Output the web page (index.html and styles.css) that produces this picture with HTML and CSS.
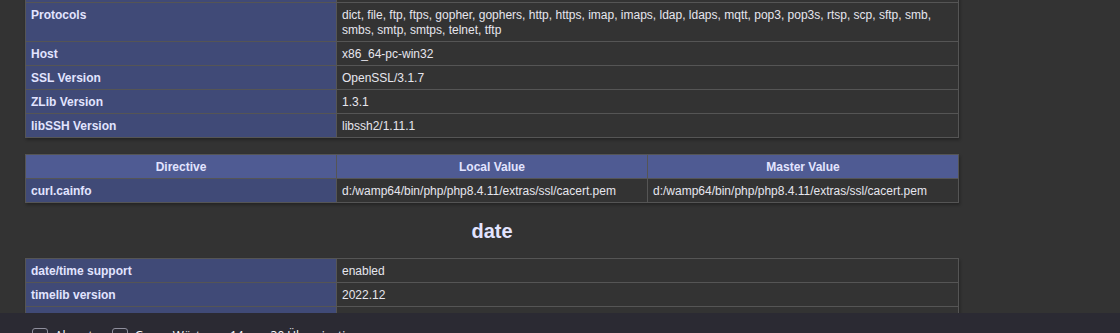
FILE: index.html
```html
<!DOCTYPE html>
<html lang="de">
<head>
    <meta charset="UTF-8">
    <meta name="viewport" content="width=device-width, initial-scale=1.0">
    <title>phpinfo()</title>
    <link rel="stylesheet" href="styles.css">
</head>
<body>
    <div class="center">
        <table class="first">
            <tr><td class="e">zstd</td><td class="v">No</td></tr>
            <tr><td class="e">Protocols</td><td class="v">dict, file, ftp, ftps, gopher, gophers, http, https, imap, imaps, ldap, ldaps, mqtt, pop3, pop3s, rtsp, scp, sftp, smb, smbs, smtp, smtps, telnet, tftp</td></tr>
            <tr><td class="e">Host</td><td class="v">x86_64-pc-win32</td></tr>
            <tr><td class="e">SSL Version</td><td class="v">OpenSSL/3.1.7</td></tr>
            <tr><td class="e">ZLib Version</td><td class="v">1.3.1</td></tr>
            <tr><td class="e">libSSH Version</td><td class="v">libssh2/1.11.1</td></tr>
        </table>

        <table class="ini">
            <tr class="h"><th>Directive</th><th>Local Value</th><th>Master Value</th></tr>
            <tr><td class="e">curl.cainfo</td><td class="v">d:/wamp64/bin/php/php8.4.11/extras/ssl/cacert.pem</td><td class="v">d:/wamp64/bin/php/php8.4.11/extras/ssl/cacert.pem</td></tr>
        </table>

        <h2><a name="module_date">date</a></h2>

        <table>
            <tr><td class="e">date/time support</td><td class="v">enabled</td></tr>
            <tr><td class="e">timelib version</td><td class="v">2022.12</td></tr>
            <tr><td class="e">&quot;Olson&quot; Timezone Database Version</td><td class="v">2025.2</td></tr>
            <tr><td class="e">Timezone Database</td><td class="v">internal</td></tr>
            <tr><td class="e">Default timezone</td><td class="v">UTC</td></tr>
        </table>
    </div>

    <div class="findbar">
        <label class="find-option"><span class="checkbox"></span>Akzente</label>
        <label class="find-option"><span class="checkbox"></span>Ganze Wörter</label>
        <span class="find-status">14 von 30 Übereinstimmungen</span>
    </div>
</body>
</html>
```

FILE: styles.css
```css
body {
    background-color: #333;
    color: #e2e4ff;
    font-family: "Liberation Sans", Arial, sans-serif;
    margin: 0;
    overflow: hidden;
}
.center {
    width: 984px;
    text-align: center;
}
table {
    border-collapse: collapse;
    border: 0;
    width: 934px;
    margin: 16px auto;
    text-align: left;
    box-shadow: 1px 2px 3px rgba(0, 0, 0, 0.3);
}
table.first {
    margin-top: -22px;
}
td, th {
    border: 1px solid #555;
    font-size: 12px;
    line-height: 15px;
    vertical-align: baseline;
    padding: 5px 5px 3px;
}
th {
    text-align: center;
}
.e {
    background-color: #404a77;
    width: 300px;
    font-weight: bold;
}
.h {
    background-color: #4f5b93;
    font-weight: bold;
}
.v {
    background-color: #333;
    color: #e6e6ee;
}
.ini th,
.ini td {
    width: 300px;
}
h2 {
    font-size: 20px;
    margin: 16px 0;
    padding-top: 2px;
    line-height: 21px;
}
h2 a {
    color: #e2e4ff;
    text-decoration: none;
}
.findbar {
    position: fixed;
    left: 0;
    right: 0;
    top: 313px;
    height: 40px;
    background-color: #2b2a33;
    color: #fbfbfe;
    font-family: "Open Sans", "Noto Sans", sans-serif;
    font-size: 12px;
    display: flex;
    align-items: center;
    padding: 5px 0 0 32px;
    box-sizing: border-box;
}
.find-option {
    display: flex;
    align-items: center;
    gap: 7px;
    margin-right: 12px;
}
.checkbox {
    width: 14px;
    height: 14px;
    border: 1px solid #8f8f9d;
    border-radius: 3px;
}
.find-status {
    margin-left: 6px;
}
```
